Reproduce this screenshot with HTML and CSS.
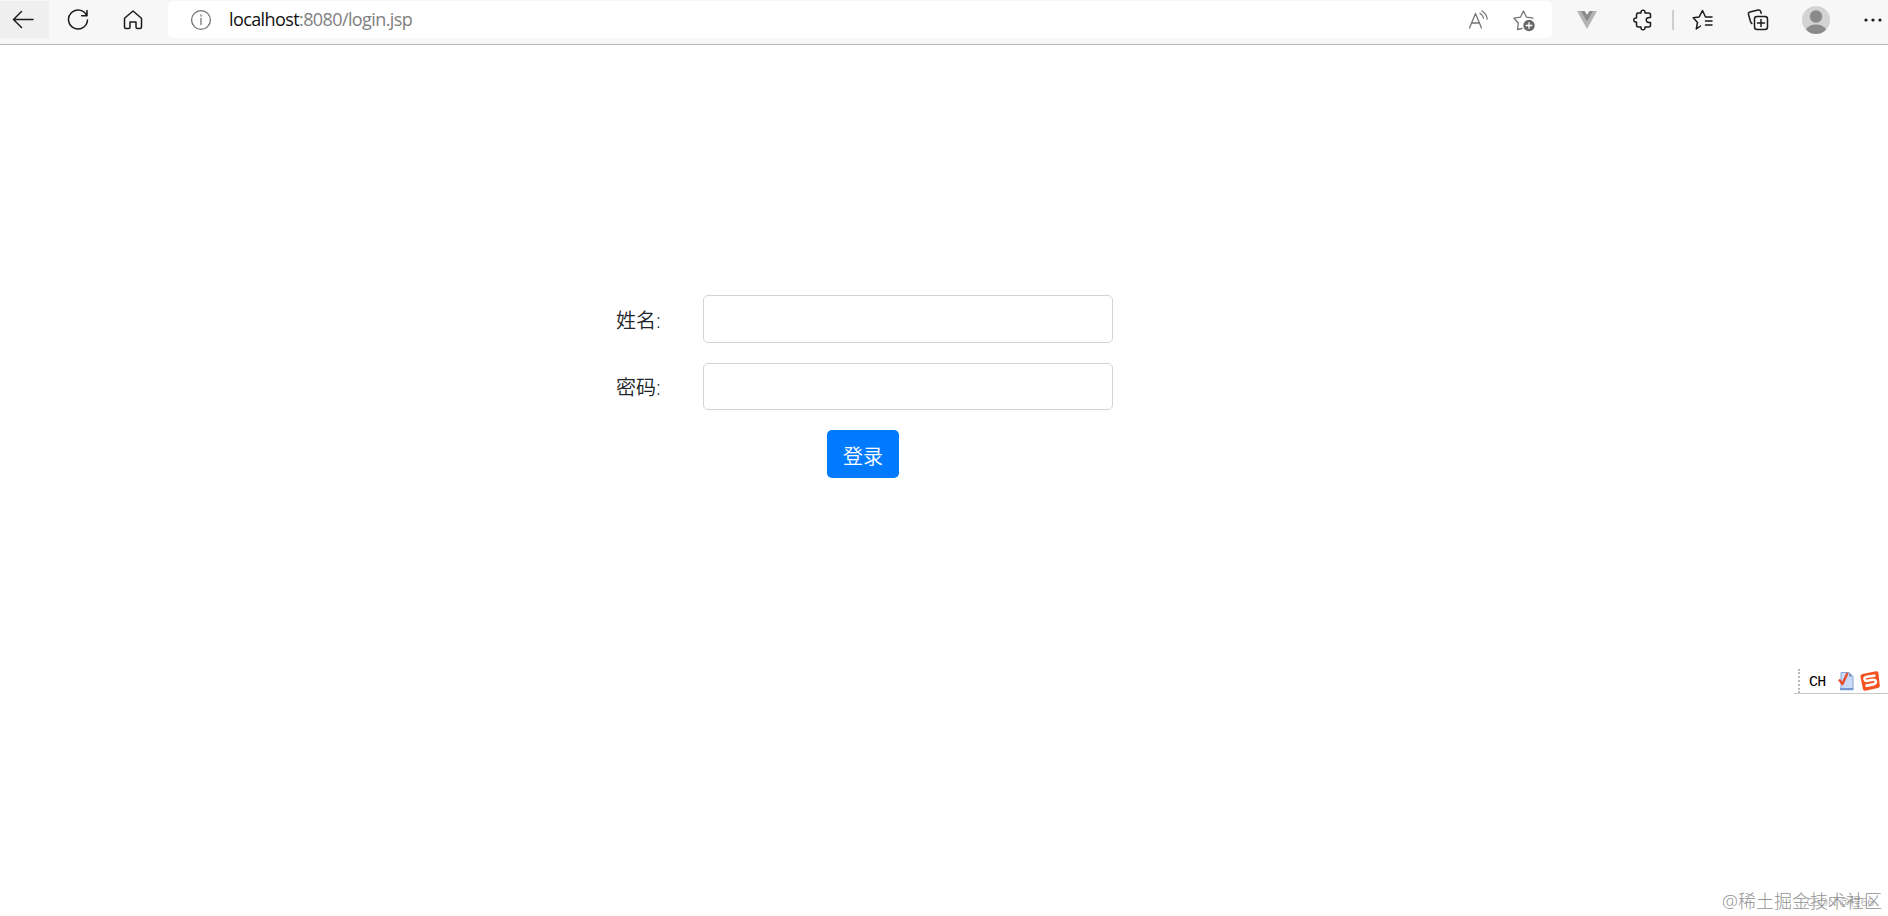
FILE: index.html
```html
<!DOCTYPE html>
<html lang="zh-CN">
<head>
    <meta charset="UTF-8">
    <meta name="viewport" content="width=device-width, initial-scale=1.0">
    <title>登录</title>
    <link rel="stylesheet" href="styles.css">
</head>
<body>

<div class="toolbar">
    <div class="nav">
        <button class="nav-btn back"><svg width="22" height="20" viewBox="0 0 22 20"><path d="M1.5 9.5H21M9.5 1.5l-8 8 8 8"/></svg></button>
        <button class="nav-btn"><svg width="22" height="22" viewBox="0 0 22 22"><path d="M19.700 6.600A9.500 9.500 0 1 0 20.500 11M20 1.500v5.200h-5.300"/></svg></button>
        <button class="nav-btn"><svg width="20" height="20" viewBox="0 0 20 20"><path d="M1.500 8.300 10 1l8.500 7.300V17q0 1.500-1.500 1.500h-2.500q-1.500 0-1.500-1.500v-5H7v5q0 1.500-1.500 1.500H3q-1.500 0-1.500-1.500z"/></svg></button>
    </div>
    <div class="address">
        <svg class="gray" width="22" height="22" viewBox="0 0 22 22"><circle cx="11" cy="11" r="9.400"/><path d="M11 9.500v6M11 6v1"/></svg>
        <span class="url">localhost<span class="path">:8080/login.jsp</span></span>
        <svg class="gray read" width="22" height="20" viewBox="0 0 22 20"><path d="M1.500 18 7.500 3.500 13.500 18M3.500 13h8M12 3.200q3 2 3.500 5M14 1q4.500 2.800 5.200 8"/></svg>
        <svg class="gray" width="24" height="24" viewBox="0 0 24 24"><path d="M10 20.500 5.500 21.500l.8-6.500L2 10.200l6.400-1L11.500 3l3 6.200 6.500 1"/><circle class="plus-bg" cx="17" cy="17.500" r="5.700"/><path class="plus" d="M17 14.700v5.600M14.200 17.500h5.600"/></svg>
    </div>
    <div class="tools">
        <svg class="vue" width="20" height="18" viewBox="0 0 20 18"><path fill="#b4b4b4" d="M0 0h7.500L10 4l2.500-4H20L10 18z"/><path fill="#8b8b8b" d="M4 0h3.500L10 4l2.500-4H16l-6 10.500z"/></svg>
        <svg class="puzzle" width="20" height="22" viewBox="0 0 20 22"><path d="M4.500 4H8q-.2-2.800 2-2.800T12 4h3.500q2 0 2 2v2.600q-4.300-.4-4.300 2.400t4.300 2.400V16q0 2-2 2H12q.2 2.800-2 2.800T8 18H5.500q-2 0-2-2v-3q-2.700.2-2.700-2t2.700-2V6q0-2 2-2z"/></svg>
        <span class="divider"></span>
        <svg class="favs" width="22" height="22" viewBox="0 0 22 22"><path d="M8.500 17 4.300 20l1.200-6.500L1.200 8.800l6-.9L10.500 1.500l3 6.500H20M13.500 12H20M13.500 16H20"/></svg>
        <svg class="collect" width="22" height="22" viewBox="0 0 22 22"><rect x="7.500" y="7.500" width="13" height="13" rx="2.500"/><path d="M14 10.500v7M10.500 14h7M4.800 14.500Q4 14 3.500 12.500L1.500 5.500Q1 3.500 3 3l8-2q2-.5 2.700 1.500l.5 1.700"/></svg>
        <svg class="avatar" width="28" height="28" viewBox="0 0 28 28"><circle cx="14" cy="14" r="14" fill="#d3d3d3"/><circle cx="14" cy="10.500" r="6.200" fill="#8a8a8a"/><path fill="#8a8a8a" d="M4 23.500q3-5 10-5t10 5q-4 4.500-10 4.500T4 23.500z"/></svg>
        <svg class="more" width="18" height="4" viewBox="0 0 18 4"><circle cx="2" cy="2" r="1.600"/><circle cx="9" cy="2" r="1.600"/><circle cx="16" cy="2" r="1.600"/></svg>
    </div>
</div>

<form class="login-form">
    <div class="form-group">
        <label for="name">姓名:</label>
        <input type="text" id="name" class="form-control">
    </div>
    <div class="form-group">
        <label for="password">密码:</label>
        <input type="password" id="password" class="form-control">
    </div>
    <button type="button" class="btn">登录</button>
</form>

<div class="ime">
    <span class="grip"></span>
    <span class="lang">CH</span>
    <svg class="doc" width="16" height="20" viewBox="0 0 16 20"><path fill="#c9dbf8" stroke="#8aa5d6" d="M3 1.500h8l4 4v12H3z"/><path fill="#7898d0" d="M11 1.500v4h4zM2 17h13.500v2.300H2z"/><path fill="none" stroke="#e84a2a" stroke-width="2.400" d="m1 8.500 3.500 4.500L9.500 2"/></svg>
    <svg width="20" height="20" viewBox="0 0 20 20"><path fill="#f4511e" d="M2.500 3 16 .3q2-.2 2.400 1.700l1.400 12.500q0 2-2 2.600L5.500 19.700q-2 .3-2.600-1.700L.4 5.500q-.2-2 2.100-2.500z"/><path class="sogou-s" d="M15.500 4.500 7 5.700q-3 .6-2.500 2.600t3 1.400l5.200-.9q3-.2 3.200 1.800t-2.700 2.800l-7.700 1.500"/></svg>
</div>

<div class="watermark">@稀土掘金技术社区<span class="csdn">CSDN @程66</span></div>

</body>
</html>
```

FILE: styles.css
```css
* {
    box-sizing: border-box;
}
body {
    margin: 0;
    height: 916px;
    overflow: hidden;
    background-color: #fff;
    color: #212529;
    font-family: "Open Sans", "Noto Sans CJK SC", sans-serif;
}
svg {
    display: block;
    flex: none;
    fill: none;
    stroke: #1b1b1b;
    stroke-width: 1.5;
    stroke-linejoin: round;
    stroke-linecap: round;
}
.toolbar {
    display: flex;
    height: 45px;
    padding-top: 1px;
    background-color: #f7f7f7;
    border-bottom: 1px solid #b5b5b5;
}
.nav {
    display: flex;
    width: 168px;
    gap: 9px;
}
.nav-btn {
    display: flex;
    align-items: center;
    justify-content: center;
    width: 46px;
    height: 37px;
    padding: 0;
    border: none;
    background: none;
}
.back {
    width: 49px;
    margin-right: -3px;
    padding-right: 4px;
    background-color: #efefef;
}
.address {
    display: flex;
    align-items: center;
    width: 1384px;
    height: 37px;
    padding: 0 16px 0 22px;
    background-color: #fff;
    border-radius: 5px;
}
.gray {
    stroke: #747474;
    stroke-width: 1.3;
}
.url {
    margin: -1px 0 0 17px;
    font-size: 18px;
    font-weight: 375;
    line-height: 24px;
    letter-spacing: -0.6px;
    color: #111;
}
.path {
    color: #808080;
}
.read {
    margin-left: auto;
    margin-right: 22px;
}
.plus-bg {
    fill: #686868;
    stroke: none;
}
.plus {
    stroke: #fff;
}
.tools {
    display: flex;
    flex: 1;
    align-items: center;
    height: 37px;
    padding-left: 25px;
}
.vue, .avatar {
    stroke: none;
}
.puzzle {
    margin-left: 36px;
}
.divider {
    width: 2px;
    height: 20px;
    margin-left: 19px;
    background-color: #cfcfcf;
}
.favs {
    margin-left: 18px;
}
.collect {
    margin-left: 33px;
}
.avatar {
    margin-left: 33px;
}
.more {
    margin-left: 34px;
    fill: #1b1b1b;
    stroke: none;
}
.login-form {
    width: 497px;
    margin: 250px 0 0 616px;
    font-size: 20px;
}
.form-group {
    display: flex;
    align-items: center;
    height: 48px;
    margin-bottom: 20px;
}
.form-group + .form-group {
    height: 47px;
}
.form-group label {
    width: 87px;
    padding-top: 3px;
    line-height: 30px;
    font-weight: 350;
}
.form-control {
    width: 410px;
    height: 100%;
    padding: 7px 15px;
    font: inherit;
    border: 1px solid #ced4da;
    border-radius: 5px;
}
.btn {
    display: block;
    width: 72px;
    height: 48px;
    margin-left: 211px;
    padding: 2px 0 0;
    font: inherit;
    font-weight: 350;
    color: #fff;
    background-color: #007bff;
    border: none;
    border-radius: 5px;
}
.ime {
    position: absolute;
    top: 665px;
    right: 0;
    display: flex;
    align-items: center;
    width: 94px;
    height: 29px;
    padding: 3px 0 0 4px;
    border-bottom: 1px solid #c9c9c9;
}
.grip {
    height: 24px;
    border-left: 2px dotted #bbb;
}
.lang {
    width: 29px;
    margin: 3px 0 0 9px;
    font: 15px "Liberation Mono", monospace;
    letter-spacing: -0.8px;
    color: #000;
}
.doc {
    margin-right: 6px;
}
.ime svg {
    stroke: none;
    stroke-linecap: butt;
    stroke-width: 1;
}
.ime .sogou-s {
    fill: none;
    stroke: #fff;
    stroke-width: 2.6;
}
.watermark {
    position: absolute;
    right: 6px;
    bottom: 2px;
    font-size: 18px;
    font-weight: 300;
    line-height: 26px;
    white-space: nowrap;
    color: #929292;
}
.csdn {
    position: absolute;
    right: 8px;
    bottom: -1px;
    font-size: 11.5px;
    color: #8c8c8c;
}
```
